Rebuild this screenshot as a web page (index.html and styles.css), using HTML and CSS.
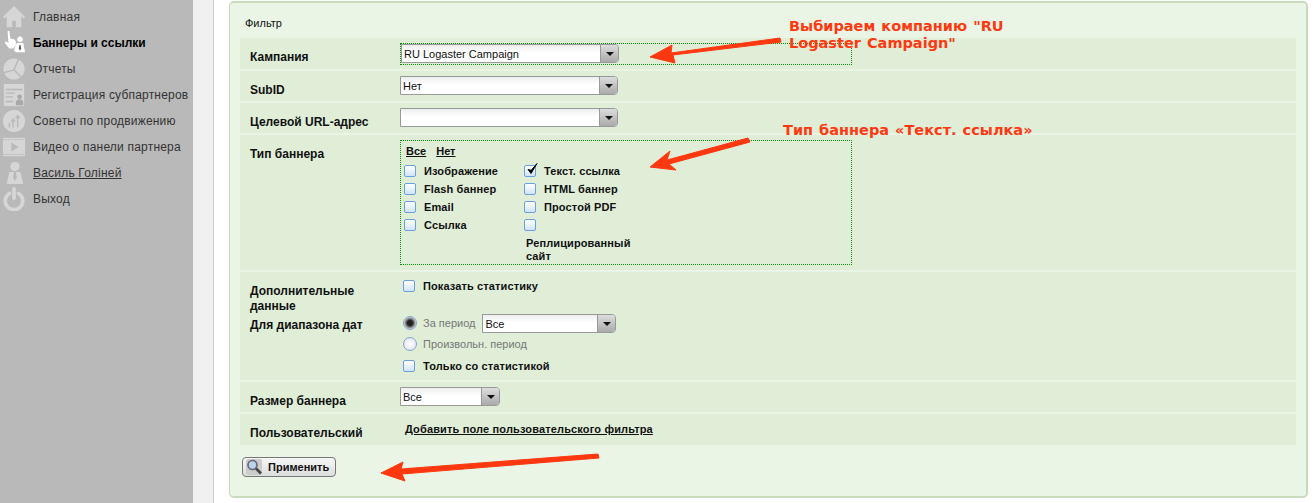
FILE: index.html
```html
<!DOCTYPE html>
<html>
  <head>
    <title>Баннеры и ссылки</title>
    <link rel="stylesheet" href="styles.css">
  </head>
  <body>
    <div class="page">
      <nav class="sidebar">
        <a class="nav-item">
          <svg class="nav-icon" viewBox="0 0 26 26"><path d="M13 1 1 13l1.500 1.500L5 12.500V24h6v-7h4v7h6V12.500l2.500 2L25 13Z"/></svg>
          <span>Главная</span>
        </a>
        <a class="nav-item active">
          <svg class="nav-icon" viewBox="0 0 26 26"><path fill="#fff" d="M6 0h2l1 8 4 1 2 2v5l-3 3H8L3 13l1-2 3 2Z"/><path fill="#fff" d="M19.500 6a3 3 0 1 1-.01 0ZM16 13h7l2 10H15l-2-2Z"/><path fill="#555" d="M19 15h1l.7 4-1.200 2.500L18.300 19Z"/></svg>
          <span>Баннеры и ссылки</span>
        </a>
        <a class="nav-item">
          <svg class="nav-icon" viewBox="0 0 26 26"><circle cx="13" cy="13" r="11.500"/><path class="cut" d="M13 14 18 2M13 14 2 17M13 14 21 22"/></svg>
          <span>Отчеты</span>
        </a>
        <a class="nav-item">
          <svg class="nav-icon" viewBox="0 0 26 26"><path d="M2 1h22v24H2Z"/><path class="cut" d="M4 7h18M4 11h10M4 15h8M4 20h8"/><circle class="dark" cx="19" cy="15" r="2.500"/><path class="dark" d="M15 24v-4l2-2h4l2 2v4Z"/></svg>
          <span>Регистрация субпартнеров</span>
        </a>
        <a class="nav-item">
          <svg class="nav-icon" viewBox="0 0 26 26"><circle cx="13" cy="13" r="12"/><path class="cut" d="M8 20v-5M12 20v-8M17 20V8M15 10l2-3 2 3M10 14l2-3 2 3"/></svg>
          <span>Советы по продвижению</span>
        </a>
        <a class="nav-item">
          <svg class="nav-icon wide" viewBox="0 0 26 22"><path d="M1 1h24v20H1Z"/><path class="cut thin" d="M1 3h24M1 19h24" stroke-dasharray="2 1"/><path fill="#b9b9b9" d="M10 6l8 5-8 5Z"/></svg>
          <span>Видео о панели партнера</span>
        </a>
        <a class="nav-item user">
          <svg class="nav-icon" viewBox="0 0 26 26"><circle cx="14" cy="6" r="5"/><path d="M8 12h12l3 13H5Z"/><path fill="#b9b9b9" d="M13 12h2l1 6-2 4-2-4Z"/></svg>
          <span>Василь Голіней</span>
        </a>
        <a class="nav-item">
          <svg class="nav-icon" viewBox="0 0 26 26"><path class="ring" d="M8 7a9.500 9.500 0 1 0 10 0"/><path class="ring" d="M13 2v10"/></svg>
          <span>Выход</span>
        </a>
      </nav>
      <div class="gutter"></div>
      <main class="content">
        <form class="filter">
          <div class="filter-title">Фильтр</div>

          <div class="row row-campaign">
            <div class="label">Кампания</div>
            <div class="focus-box">
              <div class="select select-wide"><span class="select-text">RU Logaster Campaign</span><span class="select-btn"></span></div>
            </div>
          </div>
          <div class="row row-plain">
            <div class="label">SubID</div>
            <div class="select select-wide"><span class="select-text">Нет</span><span class="select-btn"></span></div>
          </div>
          <div class="row row-plain">
            <div class="label">Целевой URL-адрес</div>
            <div class="select select-wide"><span class="select-text"></span><span class="select-btn"></span></div>
          </div>

          <div class="row row-type">
            <div class="label">Тип баннера</div>
            <div class="type-box">
              <div class="type-links"><a>Все</a><a>Нет</a></div>
              <div class="type-grid">
                <div class="type-col">
                  <label class="check-item"><span class="check"></span>Изображение</label>
                  <label class="check-item"><span class="check"></span>Flash баннер</label>
                  <label class="check-item"><span class="check"></span>Email</label>
                  <label class="check-item"><span class="check"></span>Ссылка</label>
                </div>
                <div class="type-col">
                  <label class="check-item"><span class="check checked"><svg viewBox="0 0 14 14"><path d="M3 6.500 6 10.500 12 .5 6.200 7.300Z"/></svg></span>Текст. ссылка</label>
                  <label class="check-item"><span class="check"></span>HTML баннер</label>
                  <label class="check-item"><span class="check"></span>Простой PDF</label>
                  <label class="check-item"><span class="check"></span></label>
                  <div class="check-wrapped">Реплицированный сайт</div>
                </div>
              </div>
            </div>
          </div>

          <div class="row row-extra">
            <div class="extra-labels">
              <div class="label label-extra">Дополнительные данные</div>
              <div class="label">Для диапазона дат</div>
            </div>
            <div class="extra-controls">
              <label class="check-item extra-stat"><span class="check"></span>Показать статистику</label>
              <div class="radio-line">
                <span class="radio selected"></span><span class="radio-text">За период</span>
                <div class="select select-period"><span class="select-text">Все</span><span class="select-btn"></span></div>
              </div>
              <div class="radio-line radio-line-second"><span class="radio"></span><span class="radio-text">Произвольн. период</span></div>
              <label class="check-item extra-only"><span class="check"></span>Только со статистикой</label>
            </div>
          </div>

          <div class="row row-plain">
            <div class="label">Размер баннера</div>
            <div class="select select-size"><span class="select-text">Все</span><span class="select-btn"></span></div>
          </div>
          <div class="row row-custom">
            <div class="label">Пользовательский</div>
            <a class="add-link">Добавить поле пользовательского фильтра</a>
          </div>

          <button class="apply" type="button">
            <span class="apply-icon"><svg viewBox="0 0 16 16"><circle cx="6.500" cy="6" r="4.500" fill="#bcd3ea" stroke="#667" stroke-width="1.600"/><path d="M10 9.500 15 14.500" stroke="#444" stroke-width="2.600"/></svg></span>
            Применить
          </button>
        </form>
      </main>
    </div>

    <!-- annotations drawn on top of the screenshot -->
    <svg class="arrows" viewBox="0 0 1314 503">
      <path d="M650 57 672 45 671 53 780 38 781 42 673 55 675 63Z"/>
      <path d="M650 167 670 151 667 160 748 138 750 142 669 164 676 170Z"/>
      <path d="M381 473 403 462 401 469 598 454 599 458 402 474 405 481Z"/>
    </svg>
    <div class="note note-campaign">Выбираем компанию "RU Logaster Campaign"</div>
    <div class="note note-type">Тип баннера «Текст. ссылка»</div>
  </body>
</html>
```
FILE: styles.css
```css
html,
body {
  margin: 0;
  height: 503px;
  overflow: hidden;
  background: #fff;
}
body {
  font-family: "Liberation Sans", Arial, sans-serif;
  font-size: 11px;
  color: #111;
}
.page {
  display: flex;
  height: 503px;
}

/* sidebar */
.sidebar {
  width: 193px;
  flex: none;
  box-sizing: border-box;
  padding-top: 4px;
  background: #b9b9b9;
}
.nav-item {
  display: flex;
  align-items: center;
  height: 26px;
  padding-left: 2px;
  font-size: 12px;
  letter-spacing: 0.2px;
  color: #333;
  white-space: nowrap;
}
.nav-item.active {
  font-weight: bold;
  letter-spacing: 0;
  color: #000;
}
.nav-item.user span {
  text-decoration: underline;
}
.nav-icon {
  width: 24px;
  height: 24px;
  flex: none;
  margin-right: 7px;
  fill: #d6d6d6;
}
.nav-icon .cut {
  fill: none;
  stroke: #b9b9b9;
  stroke-width: 1.5;
}
.nav-icon .cut.thin {
  stroke-width: 1;
}
.nav-icon .dark {
  fill: #a8a8a8;
}
.nav-icon .ring {
  fill: none;
  stroke: #d6d6d6;
  stroke-width: 4;
  stroke-linecap: round;
}
.gutter {
  width: 20px;
  flex: none;
  background: #f0f0f0;
  border-right: 1px solid #ccc;
}

/* filter panel */
.content {
  flex: 1;
  padding: 1px 6px 0 15px;
}
.filter {
  box-sizing: border-box;
  height: 497px;
  padding: 0 10px;
  background: #ebf5e6;
  border: 1px solid #c6dcbb;
  border-width: 2px 2px 2px 1px;
  border-radius: 5px;
}
.filter-title {
  height: 35px;
  padding: 14px 0 0 5px;
  box-sizing: border-box;
  font-size: 11px;
}
.row {
  display: flex;
  margin-bottom: 2px;
  padding-left: 10px;
  background: #e0eed8;
}
.label {
  width: 150px;
  flex: none;
  font-weight: bold;
  font-size: 12px;
  line-height: 15px;
}
.row-campaign {
  height: 31px;
  padding-top: 5px;
  box-sizing: border-box;
}
.row-campaign .label {
  padding-top: 7px;
}
.focus-box {
  width: 450px;
  height: 20px;
  border: 1px dotted #0a900a;
  display: flex;
  align-items: flex-start;
}
.row-plain {
  height: 30px;
  padding-top: 5px;
  box-sizing: border-box;
}
.row-plain .label {
  padding-top: 7px;
}

/* fake select boxes */
.select {
  display: flex;
  box-sizing: border-box;
  height: 19px;
  padding-top: 2px;
  background: linear-gradient(#eee, #fff 45%);
  border: 1px solid #999;
  border-radius: 0 4px 4px 0;
  font-size: 11px;
  line-height: 15px;
  color: #111;
}
.select-wide {
  width: 218px;
}
.select-period {
  width: 134px;
  margin-left: 7px;
}
.select-size {
  width: 100px;
}
.select-text {
  flex: 1;
  padding-left: 2px;
}
.select-btn {
  position: relative;
  width: 17px;
  margin-top: -2px;
  background: linear-gradient(#ddd, #aaa);
  border-left: 1px solid #999;
  border-radius: 0 3px 3px 0;
}
.select-btn::after {
  content: "";
  position: absolute;
  left: 5px;
  top: 7px;
  border: 4px solid transparent;
  border-top-color: #111;
  border-bottom: 0;
}

/* banner type block */
.row-type {
  height: 135px;
  padding-top: 5px;
  box-sizing: border-box;
}
.row-type .label {
  padding-top: 7px;
}
.type-box {
  width: 447px;
  height: 120px;
  border: 1px dotted #0a900a;
  padding: 3px 0 0 3px;
  font-weight: bold;
}
.type-links {
  display: flex;
  gap: 10px;
  padding: 1px 0 0 2px;
  height: 17px;
  font-size: 11px;
}
.type-links a {
  text-decoration: underline;
}
.type-grid {
  display: flex;
}
.type-col {
  width: 120px;
}
.check-item {
  display: flex;
  align-items: center;
  height: 18px;
  font-weight: bold;
  font-size: 11px;
  letter-spacing: 0.12px;
  white-space: nowrap;
}
.check {
  position: relative;
  width: 10px;
  height: 10px;
  flex: none;
  margin-right: 8px;
  background: linear-gradient(#fff, #d2e3f7);
  border: 1px solid #6a9fe0;
  border-radius: 2px;
}
.check svg {
  position: absolute;
  left: 0;
  top: -3px;
  width: 14px;
  height: 14px;
  fill: #000;
  stroke: #000;
}
.check-wrapped {
  width: 110px;
  margin-left: 2px;
  padding-top: 3px;
  font-size: 11px;
  letter-spacing: 0.12px;
  line-height: 13px;
}

/* extra data row */
.row-extra {
  height: 108px;
  box-sizing: border-box;
}
.extra-labels {
  width: 150px;
  flex: none;
  padding-top: 12px;
}
.label-extra {
  width: 115px;
  margin-bottom: 4px;
}
.extra-controls {
  padding: 5px 0 0 3px;
}
.extra-stat {
  height: 18px;
}
.radio-line {
  display: flex;
  align-items: center;
  height: 20px;
  margin-top: 18px;
  color: #777;
  font-size: 11px;
}
.radio-line-second {
  margin-top: 1px;
}
.radio {
  width: 12px;
  height: 12px;
  margin-right: 6px;
  border: 1px solid #7fa6d2;
  border-radius: 50%;
  background: radial-gradient(#fff, #dde);
}
.radio.selected {
  background: radial-gradient(#222 30%, #777 50%, #e4e4e4 75%);
}
.extra-only {
  margin-top: 3px;
}
.row-custom {
  height: 31px;
  padding-top: 9px;
  box-sizing: border-box;
  margin-bottom: 0;
}
.row-custom .label {
  padding-top: 3px;
  width: 155px;
}
.add-link {
  font-weight: bold;
  font-size: 11px;
  letter-spacing: 0.15px;
  text-decoration: underline;
}

/* apply button */
.apply {
  display: flex;
  align-items: center;
  gap: 6px;
  box-sizing: border-box;
  width: 94px;
  height: 20px;
  margin: 12px 0 0 2px;
  padding: 0 0 0 3px;
  background: linear-gradient(#f6f6f6, #ddd);
  border: 1px solid #777;
  border-radius: 4px;
  font-family: inherit;
  font-weight: bold;
  font-size: 11px;
  color: #111;
}
.apply-icon {
  display: flex;
  width: 16px;
  height: 16px;
  flex: none;
  background: #ccc;
  border-radius: 2px;
}

/* annotations */
.arrows {
  position: absolute;
  left: 0;
  top: 0;
  width: 1314px;
  height: 503px;
  fill: #ff3810;
  stroke: #ff3810;
  stroke-width: 1;
  stroke-linejoin: round;
}
.note {
  position: absolute;
  font-family: "DejaVu Sans", sans-serif;
  font-weight: bold;
  font-size: 14.5px;
  line-height: 17px;
  color: #ff3810;
}
.note-campaign {
  left: 789px;
  top: 18px;
  width: 230px;
  word-spacing: 1px;
}
.note-type {
  left: 783px;
  top: 122px;
  white-space: nowrap;
  word-spacing: 1px;
}
```
